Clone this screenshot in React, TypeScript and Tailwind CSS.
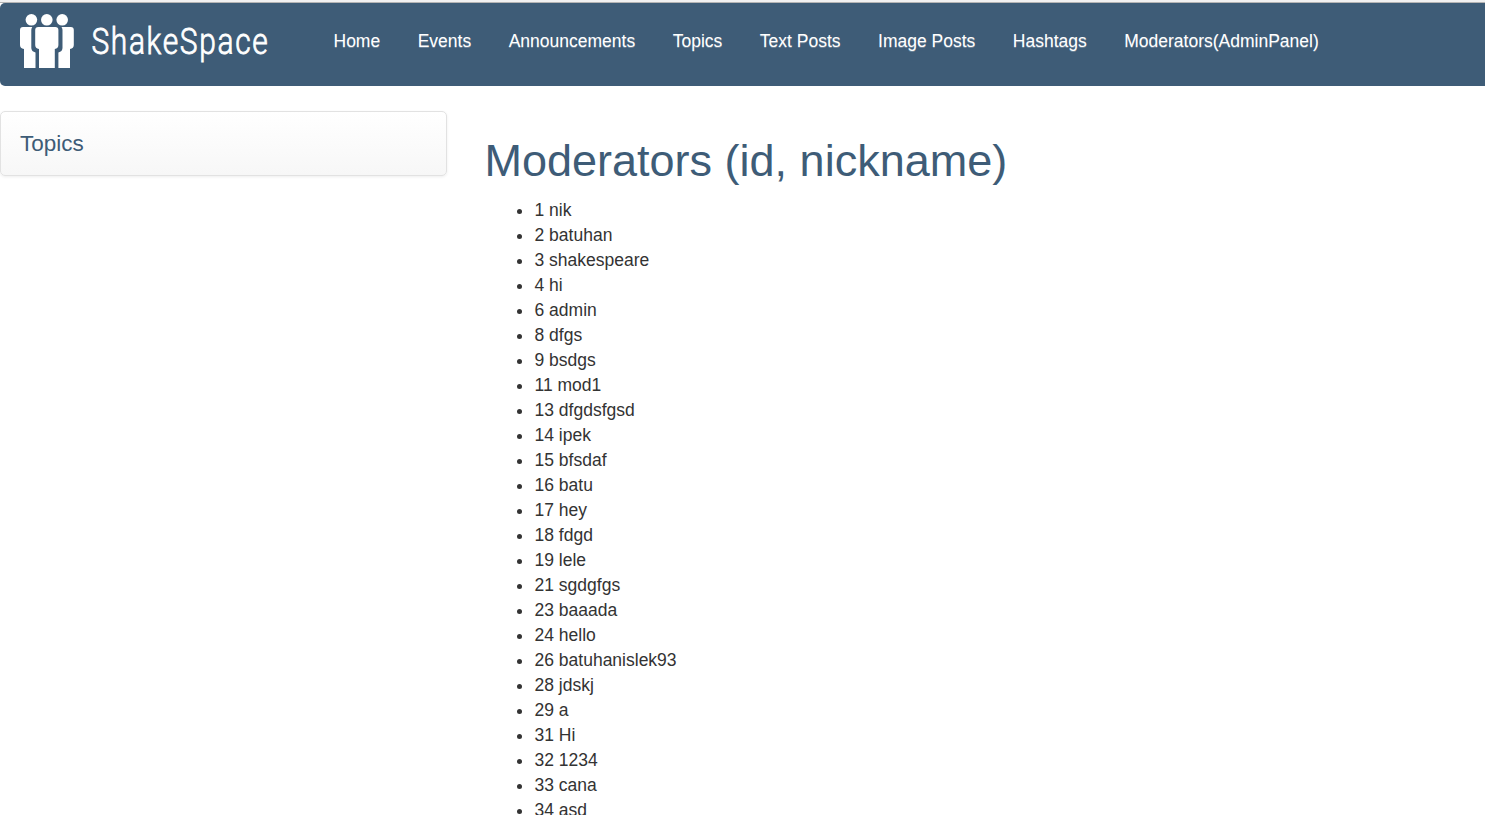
const navItems = [
  'Home', 'Events', 'Announcements', 'Topics', 'Text Posts', 'Image Posts', 'Hashtags', 'Moderators(AdminPanel)',
];

const moderators: [number, string][] = [
  [1, 'nik'], [2, 'batuhan'], [3, 'shakespeare'], [4, 'hi'], [6, 'admin'],
  [8, 'dfgs'], [9, 'bsdgs'], [11, 'mod1'], [13, 'dfgdsfgsd'], [14, 'ipek'],
  [15, 'bfsdaf'], [16, 'batu'], [17, 'hey'], [18, 'fdgd'], [19, 'lele'],
  [21, 'sgdgfgs'], [23, 'baaada'], [24, 'hello'], [26, 'batuhanislek93'], [28, 'jdskj'],
  [29, 'a'], [31, 'Hi'], [32, '1234'], [33, 'cana'], [34, 'asd'],
];

function Logo() {
  return (
    <svg className="block shrink-0" width="270" height="83" viewBox="0 3 270 83" fill="#fff" role="img" aria-label="ShakeSpace">
      <circle cx="31.4" cy="19.8" r="5.8" />
      <circle cx="46.8" cy="19.8" r="5.8" />
      <circle cx="62.2" cy="19.8" r="5.8" />
      <path d="M23 27H32.3Q31.3 28.3 31.3 30V48Q31.5 51.5 35.5 52.5V68H24V49Q20 48.5 20 45V30Q20 27 23 27Z" />
      <path d="M38.3 27H55.3Q58.4 27 58.4 30V45Q58.4 48.5 54.8 49V68H39V49Q35.2 48.5 35.2 45V30Q35.2 27 38.3 27Z" />
      <path d="M61.5 27H70.8Q73.8 27 73.8 30V45Q73.8 48.5 70 49V68H58.4V52.5Q62.4 51.5 62.5 48V30Q62.5 28.3 61.5 27Z" />
      <text
        transform="translate(91.4 54.3) scale(0.8 1)"
        fontFamily="Roboto, sans-serif"
        fontWeight="300"
        fontSize="37.4"
        textLength="220.5"
        stroke="#fff"
        strokeWidth="0.85"
      >
        ShakeSpace
      </text>
    </svg>
  );
}

export default function App() {
  return (
    <div className="flex h-[815px] flex-col overflow-hidden bg-white font-['Liberation_Sans',Arial,sans-serif] text-[17.5px] leading-[25px] text-[#333]">
      <div className="h-[3px] shrink-0 border-b border-[#b5b5b5] bg-[#f1f1f1]" />
      <header className="flex h-[83px] shrink-0 rounded-l-[5px] bg-[#3e5c77]">
        <Logo />
        <nav className="ml-[63.5px] flex gap-[37.5px] pt-[26px] whitespace-nowrap text-white [text-shadow:0_1px_0_rgba(255,255,255,0.25)]">
          {navItems.map((item) => (
            <a key={item} href="#">{item}</a>
          ))}
        </nav>
      </header>
      <div className="flex pt-[25px]">
        <aside className="h-[65px] w-[447px] shrink-0 rounded-[5px] border border-[#e2e2e2] bg-linear-to-b from-white to-[#f7f7f7] px-[19px] pt-[18px] shadow-[0_1px_3px_rgba(0,0,0,0.07)]">
          <h3 className="text-[22.5px] leading-[27px] text-[#3e5c77]">Topics</h3>
        </aside>
        <main className="ml-[37.5px] pt-[25px]">
          <h1 className="text-[45px] leading-[49.5px] text-[#3e5c77]">Moderators (id, nickname)</h1>
          <ul className="mt-[12.5px] list-disc pl-[49px]">
            {moderators.map(([id, name]) => (
              <li key={id} className="pl-px">{id} {name}</li>
            ))}
          </ul>
        </main>
      </div>
    </div>
  );
}
